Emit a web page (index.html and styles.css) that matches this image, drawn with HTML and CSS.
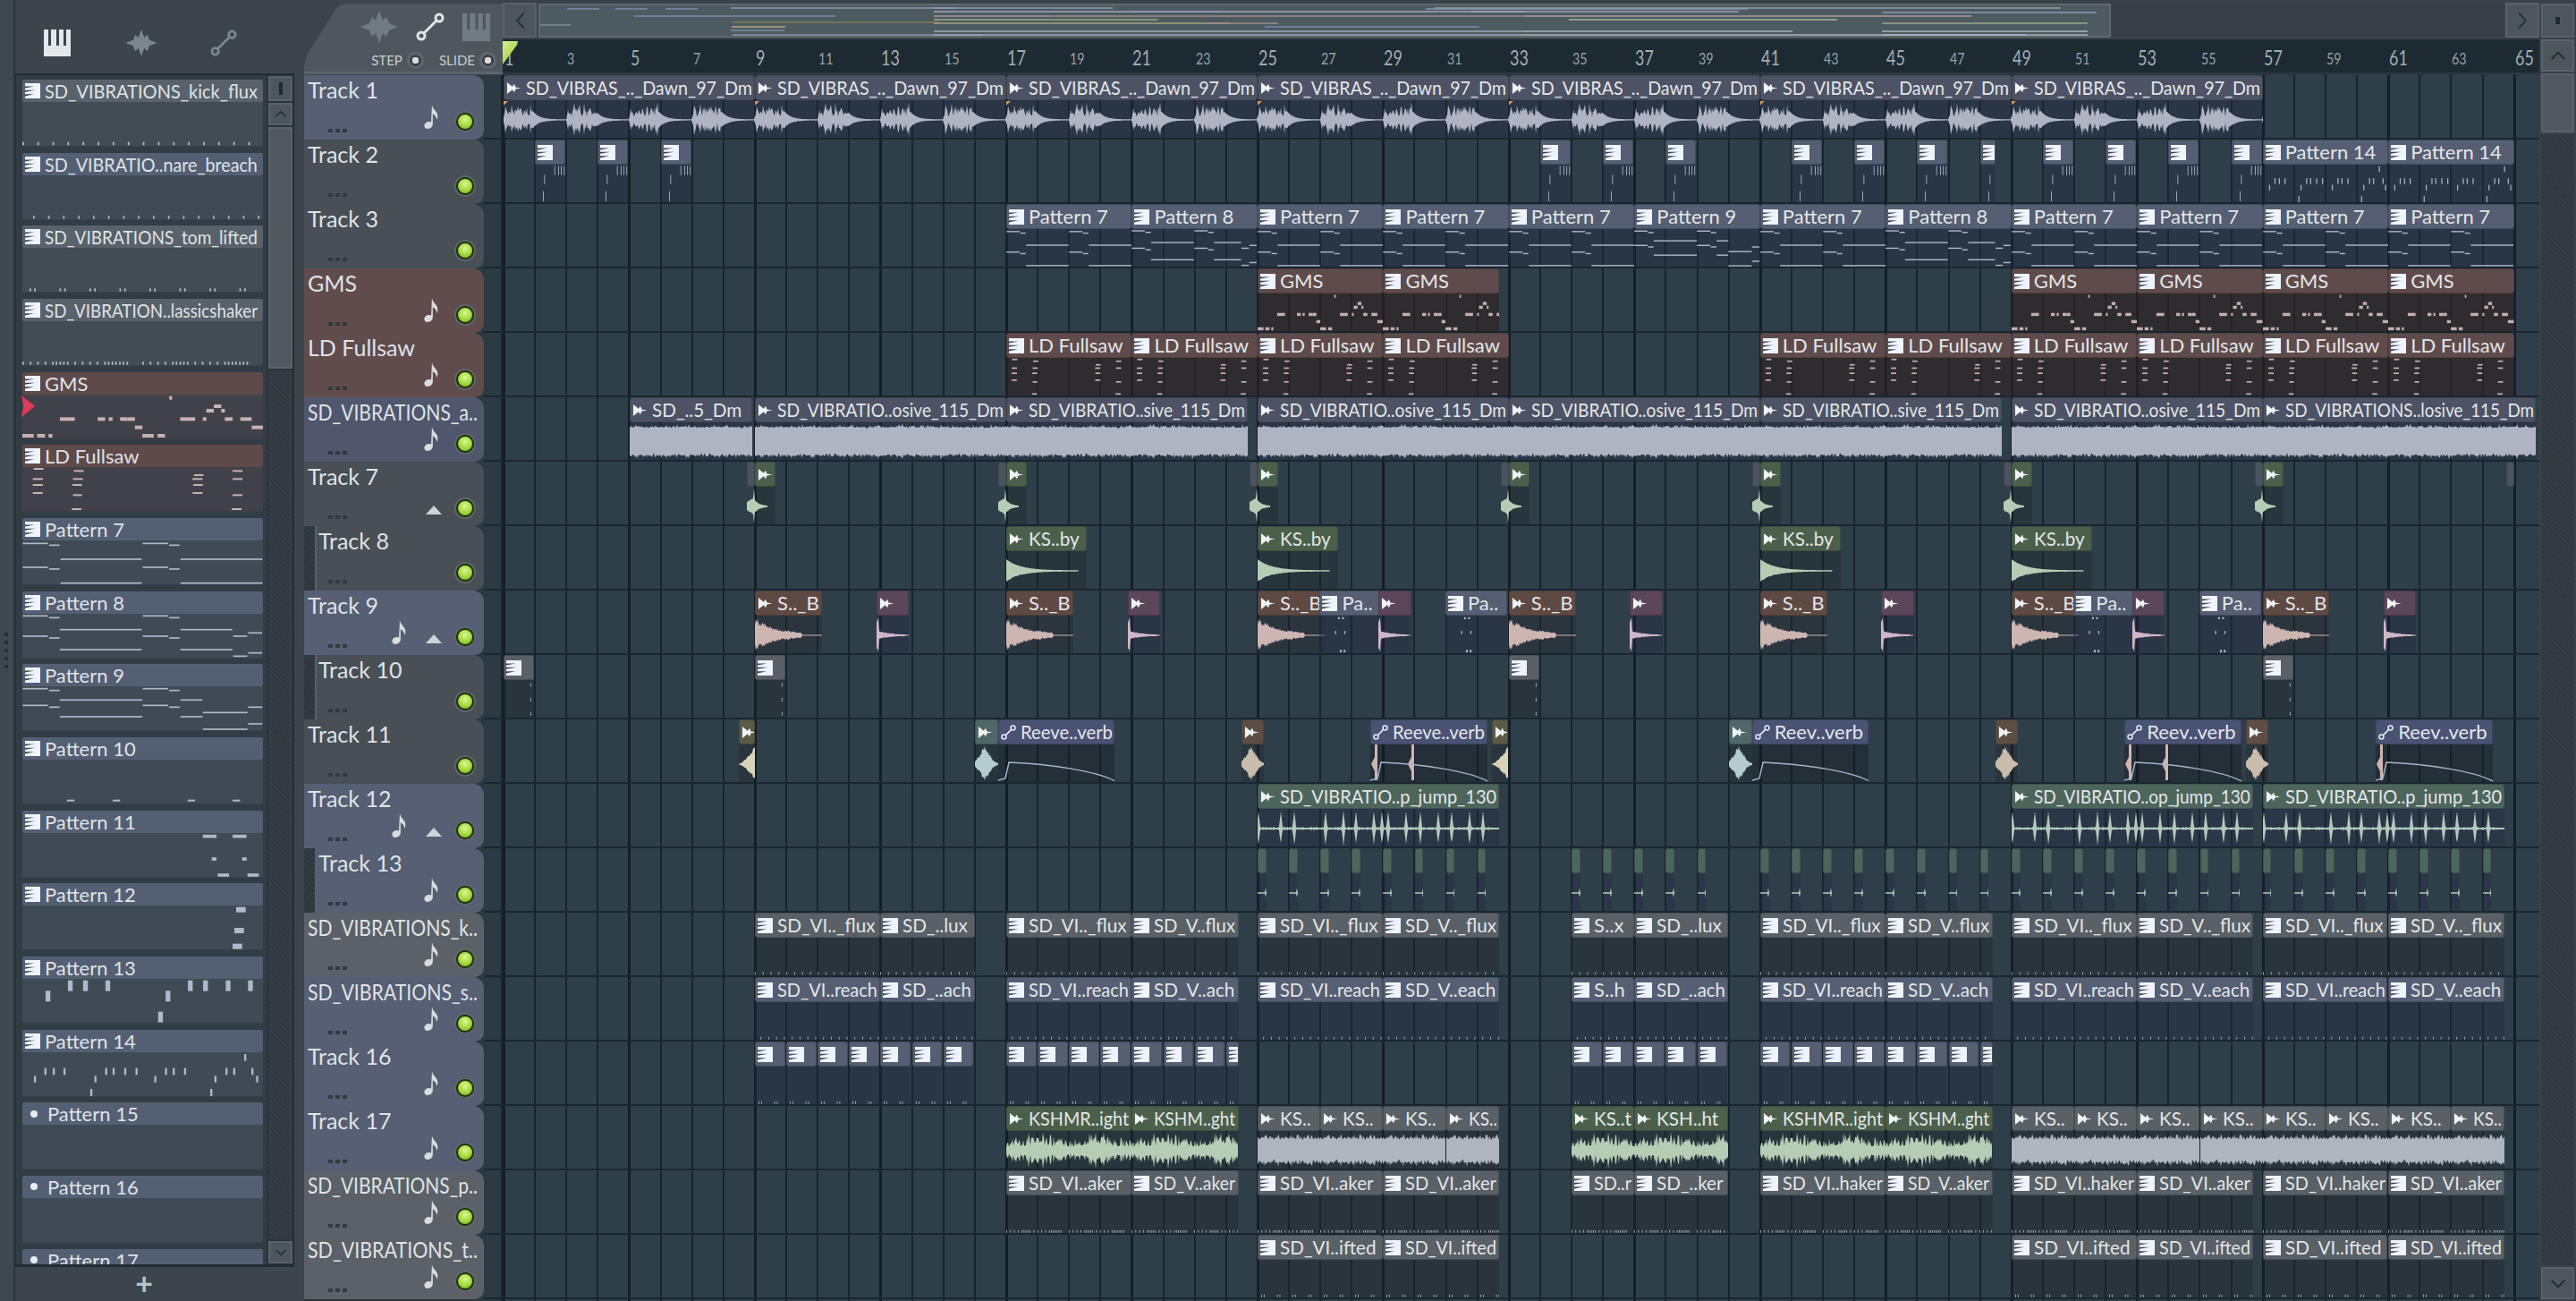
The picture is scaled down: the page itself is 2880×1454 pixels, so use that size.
FILE: index.html
```html
<!DOCTYPE html>
<html lang="en">
<head>
<meta charset="utf-8">
<title>Playlist</title>
<link rel="stylesheet" href="styles.css">
</head>
<body>
<svg class="defs" width="0" height="0" aria-hidden="true">
  <symbol id="i-pat" viewBox="0 0 17 17"><path fill="#eef3fc" d="M0 0h17v17H0z"/><path fill="#3c4453" d="M0 3.6h10.5L0 5.6zM0 7.8h11.5L0 9.8zM0 12.2h10L0 14.4z"/></symbol>
  <symbol id="i-aud" viewBox="0 0 18 18"><path fill="#eef3f4" d="M1 2l6.2 5.2L9.5 4l1.6 4 6.4 1-6.4 1-1.6 4-2.3-3.2L1 16z"/></symbol>
  <symbol id="i-auto" viewBox="0 0 22 22"><g fill="none" stroke="#e6eaf4" stroke-width="2"><circle cx="4.5" cy="17.5" r="3.2"/><circle cx="17.5" cy="4.5" r="3.2"/><path d="M7 15L15 7"/></g></symbol>
  <symbol id="i-note" viewBox="0 0 18 30"><path fill="#d8dcdc" d="M9.5 0c1 5 3.500 6 6 10 1.500 3 1.500 6 0 9-.3-3.500-2-6-5-7.500V24c0 3.500-3 6-6.500 6C1.500 30 0 28 0 26c0-3 3-5 6-5 1 0 2 .2 2.500.6z"/></symbol>
  <symbol id="i-piano" viewBox="0 0 30 30"><path fill="currentColor" d="M0 0h5v18h3V0h6v18h3V0h5v18h3V0h5v30H0z"/></symbol>
  <symbol id="i-wave" viewBox="0 0 42 36"><path fill="currentColor" d="M21 0l4 11 4-4 3 7 10 4-10 4-3 7-4-4-4 11-4-11-4 4-3-7-10-4 10-4 3-7 4 4z"/></symbol>
  <symbol id="i-curve" viewBox="0 0 32 32"><g fill="none" stroke="currentColor" stroke-width="3"><circle cx="6" cy="26" r="4"/><circle cx="26" cy="6" r="4"/><path d="M9 23L23 9"/></g></symbol>
</svg>

<div class="app">
  <div class="edge"><i></i><i></i><i></i><i></i><i></i></div>

  <aside class="picker">
    <div class="picker-tools">
      <svg class="tool tool-on"><use href="#i-piano"/></svg>
      <svg class="tool tool-wave"><use href="#i-wave"/></svg>
      <svg class="tool"><use href="#i-curve"/></svg>
    </div>
    <div class="picker-body">
      <div class="picker-list" id="picker"></div>
      <div class="picker-scroll">
        <div class="btn btn-mini"><b></b></div>
        <div class="btn btn-up"><svg viewBox="0 0 20 12"><path d="M2 10l8-8 8 8"/></svg></div>
        <div class="thumb thumb-p"></div>
        <div class="hatch"></div>
        <div class="btn btn-up"><svg viewBox="0 0 20 12"><path d="M2 2l8 8 8-8"/></svg></div>
      </div>
      <div class="marker"></div>
    </div>
    <div class="picker-add">+</div>
  </aside>

  <main class="playlist">
    <div class="pl-left">
      <div class="pl-top">
        <div class="corner">
          <div class="corner-icons">
            <svg class="ci ci-wave"><use href="#i-wave"/></svg>
            <svg class="ci ci-curve"><use href="#i-curve"/></svg>
            <svg class="ci ci-piano"><use href="#i-piano"/></svg>
          </div>
          <div class="corner-opts">
            <span>STEP</span><i class="radio"></i>
            <span>SLIDE</span><i class="radio"></i>
          </div>
        </div>
        <div class="pl-head">
          <div class="overview-row">
            <div class="btn btn-nav"><svg viewBox="0 0 14 24"><path d="M12 2L3 12l9 10"/></svg></div>
            <div class="overview" id="overview"></div>
            <div class="overview-rest"></div>
            <div class="btn btn-nav"><svg viewBox="0 0 14 24"><path d="M2 2l9 10-9 10"/></svg></div>
          </div>
          <div class="ruler" id="ruler"><div class="playhead"></div></div>
        </div>
      </div>
      <div class="pl-main">
        <div class="tracks" id="tracks"></div>
        <div class="gutter" id="gutter"></div>
        <div class="grid" id="grid"></div>
      </div>
    </div>
    <div class="vscroll">
      <div class="btn btn-big"><b></b></div>
      <div class="btn btn-bigup"><svg viewBox="0 0 20 12"><path d="M2 10l8-8 8 8"/></svg></div>
      <div class="thumb thumb-v"></div>
      <div class="hatch"></div>
      <div class="btn btn-bigup"><svg viewBox="0 0 20 12"><path d="M2 2l8 8 8-8"/></svg></div>
    </div>
  </main>
</div>
<script src="script.js"></script>
</body>
</html>
```
FILE: styles.css
```css
*{box-sizing:border-box}
html,body{margin:0;height:100%;overflow:hidden;background:#3b444a}
body{font-family:Lato,"Liberation Sans",sans-serif;color:#dfe3e6}
.defs{position:absolute}
.app{display:flex;width:2880px;height:1454px;overflow:hidden}
.fit{display:inline-block;flex:none;transform:scaleX(var(--sx,1));transform-origin:0 50%}

.edge{flex:0 0 17px;min-width:0;background:#3f484e;border-right:2px solid #2b353c;display:flex;flex-direction:column;align-items:center;justify-content:center;gap:5px;padding-right:2px}
.edge i{width:4px;height:4px;background:#283138}

.picker{flex:0 0 323px;min-width:0;display:flex;flex-direction:column;background:#3c454b;padding-right:11px}
.picker-tools{height:84px;flex:none;display:flex;align-items:flex-end;padding:0 0 19px 32px;gap:56px;border-bottom:2px solid #222c33}
.tool{width:30px;height:30px;color:#7c878c}
.tool-on{color:#e4e8ea}
.tool-wave{width:42px;margin-left:2px}
.picker-body{flex:1;display:flex;min-height:0;min-width:0;position:relative;border-bottom:3px solid #222c33;border-left:1px solid #222c33;border-right:2px solid #222c33}
.picker-list{flex:1;min-width:0;overflow:hidden;padding:5px 4px 0 7px;background:#323c44}
.picker-scroll{flex:0 0 29px;display:flex;flex-direction:column;gap:2px;background:#2a343b;padding:1px 0 1px 2px}
.picker-add{height:38px;flex:none;display:flex;align-items:center;justify-content:center;font-size:34px;font-weight:700;color:#b9c2c4;line-height:1;padding:0 24px 2px 0}
.marker{position:absolute;left:6px;top:358px;width:15px;height:24px;background:#e2395c;clip-path:polygon(0 0,100% 50%,0 100%,15% 50%);z-index:3}

.pitem{height:75px;margin-bottom:6.67px;display:flex;flex-direction:column}
.phead{height:25px;flex:none;display:flex;align-items:center;padding-left:3px;gap:5px;border-radius:2px;font-size:22px;white-space:nowrap;overflow:hidden;line-height:25px}
.phead .ic{width:17px;height:17px;flex:none}
.pdot{width:8px;height:8px;border-radius:50%;background:#e8ecf0;margin:0 6px 0 6px;flex:none}
.pbody{flex:1;overflow:hidden;background:#3f4a54;border-bottom:1px solid #36414a}
.pitem.red .pbody{background:#414149}
.pitem.grey .pbody{background:#414c54}
.pitem svg.notes{display:block;width:100%;height:100%}

.btn{background:#4e565d;box-shadow:inset 0 0 0 2px #5a6269;flex:none;display:flex;align-items:center;justify-content:center}
.btn svg{fill:none;stroke:#1f2a31;stroke-width:2}
.btn-mini{height:28px}
.btn-mini b{width:4px;height:14px;background:#1f2a31}
.btn-up{height:25px}
.btn-up svg{width:14px;height:9px}
.thumb{background:#50585f;box-shadow:inset 0 0 0 2px #5a6269;flex:none}
.thumb-p{height:270px}
.hatch{flex:1;background:repeating-linear-gradient(45deg,#30383e 0 2px,#363e44 2px 4px)}

.playlist{flex:1;display:flex;min-width:0}
.pl-left{flex:0 0 2499px;display:flex;flex-direction:column;min-width:0}
.pl-top{height:84px;flex:none;display:flex}
.corner{flex:0 0 222px;height:80px;margin-top:3px;background:#4f575d;clip-path:path('M0 80 V70 Q1 63 4 57 L33 11 Q38 1 48 1 H222 V80 Z');display:flex;flex-direction:column;align-items:flex-end;padding:9px 7px 0 0;border-bottom:3px solid #5d656b}
.corner-icons{display:flex;align-items:center;gap:20px;padding-right:7px;height:36px}
.ci{color:#717c81}
.ci-wave{width:42px;height:36px}
.ci-curve{width:32px;height:32px;color:#dfe4e6}
.ci-piano{width:31px;height:31px}
.corner-opts{display:flex;align-items:center;gap:5px;font-size:15px;color:#c6cccf;margin-top:8px;height:22px}
.corner-opts span{margin-left:12px}
.radio{width:19px;height:19px;border-radius:50%;background:radial-gradient(circle,#d8dcdc 0 3.5px,#3c444a 4px 6px,#5f686e 7px)}

.pl-head{flex:1;display:flex;flex-direction:column;min-width:0}
.overview-row{height:44px;flex:none;display:flex;gap:2px;padding-top:3px;background:#3a4248}
.btn-nav{width:38px;height:39px}
.btn-nav svg{width:13px;height:20px}
.overview{flex:0 0 1758px;height:38px;margin-top:1px;background:#4d5b60;border:2px solid #60696b;position:relative;overflow:hidden}
.ov{position:absolute;height:2px;opacity:.75}
.overview-rest{flex:1;background:#383f45;height:39px}
.ruler{flex:1;background:#1e2a32;position:relative;border-bottom:3px solid #2b373f;overflow:hidden}
.rnum{position:absolute;bottom:7px;line-height:1;color:#95a1a7;font-size:17px;transform:scaleX(.84);transform-origin:0 0}
.rnum.big{font-size:23px;color:#a2adb3;bottom:5px;transform:scaleX(.78)}
.playhead{position:absolute;left:0;top:2px;width:17px;height:26px;background:linear-gradient(135deg,#d9f08f,#95c52f);clip-path:polygon(0 0,100% 0,95% 15%,0 100%);z-index:2}

.pl-main{flex:1;display:flex;min-height:0;background:#2a3840}
.tracks{flex:0 0 201px;min-width:0;display:flex;flex-direction:column}
.gutter{flex:0 0 21px;background:#2b3a43;border-right:2px solid #18242c}
.grid{flex:1;min-width:0;background:repeating-linear-gradient(90deg,#131e26 0 3px,transparent 3px 140.48px),repeating-linear-gradient(90deg,#18242c 0 2px,#2f3f49 2px 35.12px);position:relative;overflow:hidden}
.gutrow{height:72px;border-bottom:2px solid #1a262e}

.track{height:72px;flex:none;position:relative;border-radius:0 12px 10px 0;background:var(--t);font-size:25px;line-height:1;padding:4px 0 0 4px;white-space:nowrap;overflow:hidden}
.track.indent{padding-left:16px}
.track.indent::before{content:"";position:absolute;left:0;top:0;bottom:0;width:12px;background:repeating-linear-gradient(45deg,#2c353b 0 2px,#343d43 2px 4px);border-right:2px solid #5a6268}
.track .dots{position:absolute;left:27px;bottom:8px;width:21px;height:4px;background:repeating-linear-gradient(90deg,#32393f 0 5px,transparent 5px 8px)}
.track .tnote{position:absolute;right:49px;top:33px;width:19px;height:27px}
.track.tri .tnote{right:85px}
.track .tri-up{position:absolute;right:47px;top:49px;width:18px;height:10px;background:#cfd4d6;clip-path:polygon(50% 0,100% 100%,0 100%)}
.track .led{position:absolute;right:11px;top:42px;width:20px;height:20px;border-radius:50%;border:2px solid #1d3005;box-shadow:0 0 0 2px #5d666b;background:radial-gradient(circle at 50% 35%,#dcf694 0,#a6dc44 50%,#6fa91f 100%)}
.t-blue{--t:#565f73}
.t-dark{--t:#484f55}
.t-red{--t:#604c4d}
.t-ind{--t:#50566c}
.t-light{--t:#5b6166}

.row{height:72px;border-bottom:2px solid #1a262e;position:relative}
.clip{position:absolute;top:0;height:70px;display:flex;flex-direction:column}
.clip-head{height:28px;flex:none;background:var(--h);border-radius:3px;border:1px solid rgba(20,26,30,.25);display:flex;align-items:center;font-size:22px;line-height:26px;color:#e2e6e8;padding-left:2px;gap:5px;white-space:nowrap;overflow:hidden;position:relative}
.clip-head .ic{width:17px;height:17px;flex:none}
.clip-body{flex:1;min-height:0;background:var(--b);color:var(--n);overflow:hidden;position:relative}
.clip-body svg{display:block;fill:currentColor}
.clip.bleed .clip-body{overflow:visible}
.clip.bleed .clip-body svg{overflow:visible}
.clip-body .mk{position:absolute;left:0;top:1px;width:5px;height:5px;background:#d89a58;clip-path:polygon(0 0,100% 0,0 100%)}
.curve{stroke:#a9b2cc;stroke-width:1.500;fill:none!important}

.slate{--h:#555e72;--b:rgba(36,40,66,.42);--n:#aeb5c9}
.dawn{--h:#4d5364;--b:rgba(36,40,66,.42);--n:#b0b4c2}
.grey{--h:#596066;--b:rgba(34,36,36,.36);--n:#aeb5bd}
.red{--h:#5f4b4b;--b:rgba(48,32,32,.62);--n:#c4aeb0}
.green{--h:#4b5f4b;--b:rgba(30,36,36,.34);--n:#b7ccb4}
.mint{--h:#4f6766;--b:rgba(26,32,38,.36);--n:#b4cbd0}
.teal{--h:#4e655c;--b:rgba(36,40,66,.38);--n:#b2c9bb}
.brown{--h:#5e4a43;--b:rgba(34,36,40,.34);--n:#cdb6b2}
.tan{--h:#5c4e44;--b:rgba(34,36,40,.34);--n:#c9bcab}
.purple{--h:#5c4659;--b:rgba(36,40,66,.44);--n:#cfb6c6}
.khaki{--h:#5a5a46;--b:rgba(34,36,40,.34);--n:#d6d3b8}
.auto{--h:#4a5274;--b:rgba(20,26,30,.4);--n:#a9b2cc}
.sliver{--h:#4b535f;--b:transparent;--n:transparent}

.vscroll{flex:1;display:flex;flex-direction:column;gap:2px;padding:4px 2px 2px 2px;background:#3a4248;min-width:0}
.btn-big{height:38px}
.btn-big b{width:5px;height:8px;background:#1f2a31}
.btn-bigup{height:36px}
.btn-bigup svg{width:20px;height:11px;stroke-width:2}
.thumb-v{height:66px}
```
FILE: script.js
```js
const BAR = 35.12, W4 = BAR * 4;

/* note data: [x, y, w, h] on an 808 x 147 canvas, i.e. one 4-bar pattern */
function lines(list, y0, h) { return list.map(n => [n[0] - 72, n[2] - y0 - h / 2, n[1] - n[0], h]); }
function p7base(y0, a) {
  return [[73,158,a],[162,197,a+6],[476,562,a],[565,600,a+6]];
}
const NOTES = {
  kick: Array.from({length:17}, (_, i) => [i * 50.6, 134, 5, 11]),
  snare: Array.from({length:16}, (_, i) => [36 + 50.35 * i, 136, 5, 10]),
  tom: Array.from({length:8}, (_, i) => [[24 + 100.7 * i, 136, 5, 10], [40 + 100.7 * i, 136, 5, 10]]).flat(),
  shaker: [0,25,50,75,100,112,125,137,150,175,200,225,250,275,287,300,312,325,337,350].flatMap(x => [[x, 136, 5, 10], [x + 403, 136, 5, 10]]),
  gms: lines([[565,575,326],[715,740,354],[690,715,369],[740,752,369],[198,248,397],[325,350,397],[362,375,397],[400,425,397],[425,450,397],[602,652,397],[678,690,397],[752,778,397],[804,842,397],[450,475,425],[842,880,425],[72,110,453],[122,148,453],[160,173,453],[475,513,453],[526,551,453]], 315, 12),
  ld: lines([[110,143,568],[245,278,575],[107,141,602],[242,275,602],[107,141,622],[240,272,622],[107,140,649],[242,272,656],[238,270,703],[648,680,589],[643,677,602],[646,678,622],[644,677,649],[778,811,575],[778,811,602],[778,811,656],[775,808,703]], 562, 6),
  p7: lines([...p7base(0,815),...p7base(0,895),[200,473,868],[200,473,948],[603,878,868],[603,878,948]], 805, 5),
  p8: lines([...p7base(0,1059),...p7base(0,1127),[198,473,1105],[198,473,1172],[603,777,1105],[603,777,1172],[780,827,1127],[830,877,1116],[780,827,1194],[830,877,1183]], 1052, 5),
  p9: lines([...p7base(0,105),...p7base(0,161),[198,475,143],[198,475,199],[603,677,143],[603,677,199],[678,828,185],[678,828,241],[830,878,167],[830,878,223]], 97, 5),
  p10: [[150,134,25,6],[303,134,25,6],[555,134,25,6],[706,134,25,6]],
  p11: lines([[678,724,601],[778,825,601],[708,724,677],[810,825,677],[728,766,731],[828,866,731]], 590, 11),
  p12: lines([[790,822,850],[784,816,920],[778,810,973]], 836, 18),
  p13: [[153,5,16,36],[204,5,16,36],[279,5,16,36],[556,5,16,36],[607,5,16,36],[683,5,16,36],[758,5,16,36],[78,40,16,36],[481,40,16,36],[456,110,16,36]],
  p14: [[745,6,7,23],...[74,102,138,278,303,342,380,479,505,543,682,708,769].map(x => [x,53,7,23]),...[39,242,443,645,785].map(x => [x,79,7,22]),[228,123,7,24],[631,123,7,24]],
  small: [[150,5,5,36],[168,5,5,36],[186,5,5,36],[125,5,5,36],[60,40,5,36],[52,104,5,40]],
  tail: [[172,12,5,14],[172,70,5,14],[172,125,5,14]],
  pa: [[120,6,12,8],[146,6,12,8],[100,60,8,12],[160,60,8,12],[132,134,12,10],[156,134,12,10]],
  none: []
};

function notesSvg(key, width, height) {
  const rects = NOTES[key].map(n => `<rect x="${n[0]}" y="${n[1]}" width="${n[2]}" height="${n[3]}"/>`).join('');
  return `<svg class="notes" width="${width}" height="${height}" viewBox="0 0 808 147" preserveAspectRatio="none">${rects}</svg>`;
}

/* waveforms: amplitude functions, drawn mirrored about the centre line */
function rng(seed) { return () => (seed = seed * 16807 % 2147483647) / 2147483647; }
const JUMP = [1,26,41,76,96,110,130,139,146,166,182,202,217,237,252];
const AMP = {
  dawn: (i, r) => { const t = i % (BAR * 2); return t < 33 ? (.34 + .66 * Math.pow(r(), 1.4)) * (.5 + .5 * Math.abs(Math.sin(t * .55))) * (t < 3 ? .9 : 1) : .45 * Math.exp(-(t - 33) / 7) + .03; },
  noise: (i, r) => .78 + .12 * r() + (r() > .93 ? .1 : 0),
  kick: (i, r) => i > 80 ? 0 : .03 + .62 * Math.exp(-i / 16),
  snare: (i, r) => i > 52 ? .03 : .03 + Math.exp(-i / 27) * (.55 + .45 * r()),
  tick: (i, r) => i > 32 ? .03 : .03 + (i < 3 ? 1 : .3 * Math.exp(-i / 12)) * (.7 + .3 * r()),
  diamond: (i, r) => i < 8 ? .25 + i * .03 : (i === 8 ? 1 : .03 + .4 * Math.exp(-(i - 8) / 5)),
  burst: (i, r) => { const d = (i - 11) / 8; return .03 + Math.exp(-d * d) * (.55 + .45 * r()); },
  rise: (i, r, w) => Math.max(.03, Math.pow(i / w, 1.3) * (.7 + .3 * r())),
  jump: (i, r) => { let a = .05; JUMP.forEach(x => { const d = (i - x) / 1.3; a = Math.max(a, .95 * Math.exp(-d * d)); }); return a + .08 * r() * (i % 3 === 0 ? 1 : 0); },
  tiny: (i) => i === 9 ? .28 : (i < 9 ? .04 : 0),
  green: (i, r) => Math.max(.12, (.3 + .85 * r() * Math.sqrt(r())) * (.55 + .45 * Math.abs(Math.sin(i * .045)))),
  dense: (i, r) => .62 + .38 * r() * r() + (i % 4 === 0 ? .2 * r() : 0)
};
const pathCache = {};
function wavePath(type, w, h) {
  const key = type + w;
  if (pathCache[key]) return pathCache[key];
  const r = rng(4711 + type.length * 31), mid = h / 2 + 1, span = h / 2 - 1;
  const n = Math.round(w), ups = [], dns = [];
  for (let i = 0; i <= n; i++) {
    const a = Math.min(1, AMP[type](i, r, n)) * span;
    ups.push(`${i} ${(mid - a).toFixed(1)}`);
    dns.unshift(`${i} ${(mid + a * (.8 + .2 * r())).toFixed(1)}`);
  }
  return pathCache[key] = `M${ups.join('L')}L${dns.join('L')}Z`;
}
function waveSvg(type, w, off) {
  const width = Math.round(w);
  return `<svg width="${width}" height="42"${off ? ` style="margin-left:${off}px"` : ''}><path d="${wavePath(type, width, 42)}"/></svg>`;
}

/* clip helpers */
const ICON = { p: 'i-pat', a: 'i-aud', c: 'i-auto' };
function clip(b, w, text, color, icon, body, extra) { return { b, w, text, color, icon, body, extra: extra || '' }; }
const pat = (b, w, text, color, key) => clip(b, w, text, color, 'p', { n: key });
const aud = (b, w, text, color, type, extra, off) => clip(b, w, text, color, 'a', { w: type, off }, extra);

const rows = Array.from({length: 19}, () => []);
const seq = (start, n, step) => Array.from({length: n}, (_, i) => start + i * step);

seq(1, 7, 8).forEach(b => rows[0].push(Object.assign(aud(b, 8, 'SD_VIBRAS_.._Dawn_97_Dm', 'dawn', 'dawn'), {mark: true})));

[2,4,6,34,36,38,42,44,46,50,52,54,56].forEach(b => rows[1].push(pat(b, .97, '', 'slate', 'small')));
rows[1].push(pat(48, .5, '', 'slate', 'small'));
rows[1].push(pat(57, 4, 'Pattern 14', 'slate', 'p14'), pat(61, 4, 'Pattern 14', 'slate', 'p14'));

[[17,7],[21,8],[25,7],[29,7],[33,7],[37,9],[41,7],[45,8],[49,7],[53,7],[57,7],[61,7]].forEach(([b, p]) => rows[2].push(pat(b, 4, 'Pattern ' + p, 'slate', 'p' + p)));

[[25,4],[29,3.7],[49,4],[53,4],[57,4],[61,4]].forEach(([b, w]) => rows[3].push(pat(b, w, 'GMS', 'red', 'gms')));
[17,21,25,29,41,45,49,53,57,61].forEach(b => rows[4].push(pat(b, 4, 'LD Fullsaw', 'red', 'ld')));

[[5,3.9,'SD_..5_Dm'],[9,8,'SD_VIBRATIO..osive_115_Dm'],[17,7.7,'SD_VIBRATIO..sive_115_Dm'],[25,8,'SD_VIBRATIO..osive_115_Dm'],[33,8,'SD_VIBRATIO..osive_115_Dm'],[41,7.7,'SD_VIBRATIO..sive_115_Dm'],[49,8,'SD_VIBRATIO..osive_115_Dm'],[57,8.7,'SD_VIBRATIONS..losive_115_Dm']].forEach(([b, w, t]) => rows[5].push(aud(b, w, t, 'dawn', 'noise')));

[9,17,25,33,41,49,57].forEach(b => {
  rows[6].push(clip(b - .25, .25, '', 'sliver', '', null));
  rows[6].push(aud(b, .66, '', 'green', 'diamond', 'bleed', -9));
});
rows[6].push(clip(64.75, .25, '', 'sliver', '', null));

[17,25,41,49].forEach(b => rows[7].push(aud(b, 2.57, 'KS..by', 'green', 'kick')));

[9,17,25,33,41,49,57].forEach(b => rows[8].push(aud(b, 2.13, 'S.._B', 'brown', 'snare')));
[27,31,51,55].forEach(b => rows[8].push(pat(b - .02, 1.96, 'Pa..', 'slate', 'pa')));
[9,17,25,33,41,49,57].forEach(b => rows[8].push(aud(b + 3.86, 1.03, '', 'purple', 'tick')));

[1,9,33,57].forEach(b => rows[9].push(pat(b, .97, '', 'grey', 'tail')));

rows[10].push(
  aud(8.5, .5, '', 'khaki', 'rise'),
  aud(16, .74, '', 'mint', 'burst'),
  clip(16.74, 3.72, 'Reeve..verb', 'auto', 'c', {c: 1}),
  aud(24.5, .7, '', 'tan', 'burst'),
  clip(28.6, 3.72, 'Reeve..verb', 'auto', 'c', {c: 1, spikes: [5, 46]}),
  aud(32.47, .5, '', 'khaki', 'rise'),
  aud(40, .74, '', 'mint', 'burst'),
  clip(40.74, 3.72, 'Reev..verb', 'auto', 'c', {c: 1}),
  aud(48.5, .7, '', 'tan', 'burst'),
  clip(52.6, 3.72, 'Reev..verb', 'auto', 'c', {c: 1, spikes: [5, 46]}),
  aud(56.47, .7, '', 'tan', 'burst'),
  clip(60.6, 3.72, 'Reev..verb', 'auto', 'c', {c: 1, spikes: [5]})
);

rows[11].push(aud(25, 7.7, 'SD_VIBRATIO..p_jump_130', 'teal', 'jump'), aud(49, 7.7, 'SD_VIBRATIO..op_jump_130', 'teal', 'jump'), aud(57, 7.7, 'SD_VIBRATIO..p_jump_130', 'teal', 'jump'));

[...seq(25, 8, 1), ...seq(35, 5, 1), ...seq(41, 24, 1)].forEach(b => rows[12].push(aud(b, .28, '', 'teal', 'tiny', 'nano')));

function section(row, names, key, color, kind) {
  names.forEach(([b, w, t]) => rows[row].push(kind === 'a' ? aud(b, w, t, color, key) : pat(b, w, t, color, key)));
}
section(13, [[9,3.98,'SD_VI.._flux'],[13,3,'SD_..lux'],[17,3.98,'SD_VI.._flux'],[21,3.4,'SD_V..flux'],[25,3.98,'SD_VI.._flux'],[29,3.7,'SD_V.._flux'],[35,1.98,'S..x'],[37,2.98,'SD_..lux'],[41,3.98,'SD_VI.._flux'],[45,3.4,'SD_V..flux'],[49,3.98,'SD_VI.._flux'],[53,3.7,'SD_V.._flux'],[57,3.98,'SD_VI.._flux'],[61,3.7,'SD_V.._flux']], 'kick', 'grey');
section(14, [[9,3.98,'SD_VI..reach'],[13,3,'SD_..ach'],[17,3.98,'SD_VI..reach'],[21,3.4,'SD_V..ach'],[25,3.98,'SD_VI..reach'],[29,3.7,'SD_V..each'],[35,1.98,'S..h'],[37,2.98,'SD_..ach'],[41,3.98,'SD_VI..reach'],[45,3.4,'SD_V..ach'],[49,3.98,'SD_VI..reach'],[53,3.7,'SD_V..each'],[57,3.98,'SD_VI..reach'],[61,3.7,'SD_V..each']], 'snare', 'slate');
[...seq(9, 7, 1), ...seq(17, 7, 1), ...seq(35, 5, 1), ...seq(41, 7, 1)].forEach(b => rows[15].push(pat(b, .96, '', 'slate', 'tom')));
rows[15].push(pat(24, .4, '', 'slate', 'tom'), pat(48, .4, '', 'slate', 'tom'));
section(16, [[17,3.98,'KSHMR..ight'],[21,3.4,'KSHM..ght'],[35,1.98,'KS..t'],[37,2.98,'KSH..ht'],[41,3.98,'KSHMR..ight'],[45,3.4,'KSHM..ght']], 'green', 'green', 'a');
[...seq(25, 4, 2).map(b => [b, b === 31 ? 1.7 : 2]), ...seq(49, 8, 2).map(b => [b, b === 63 ? 1.7 : 2])].forEach(([b, w]) => rows[16].push(aud(b, w, 'KS..', 'grey', 'dense')));
section(17, [[17,3.98,'SD_VI..aker'],[21,3.4,'SD_V..aker'],[25,3.98,'SD_VI..aker'],[29,3.7,'SD_VI..aker'],[35,1.98,'SD..r'],[37,2.98,'SD_..ker'],[41,3.98,'SD_VI..haker'],[45,3.4,'SD_V..aker'],[49,3.98,'SD_VI..haker'],[53,3.7,'SD_VI..aker'],[57,3.98,'SD_VI..haker'],[61,3.7,'SD_VI..aker']], 'shaker', 'grey');
section(18, [[25,3.98,'SD_VI..ifted'],[29,3.7,'SD_VI..ifted'],[49,3.98,'SD_VI..ifted'],[53,3.7,'SD_VI..ifted'],[57,3.98,'SD_VI..ifted'],[61,3.7,'SD_VI..ifted']], 'tom', 'grey');

/* playlist grid */
function clipHtml(c) {
  const px = c.w * BAR;
  let body = '';
  if (c.body && c.body.n) body = notesSvg(c.body.n, W4, 42);
  else if (c.body && c.body.w) body = waveSvg(c.body.w, px, c.body.off);
  else if (c.body && c.body.c) {
    const spikes = (c.body.spikes || []).map(s => `<path d="M${s} 40V0h3v40zM${s - 4} 22l4-8v16z" fill="#cdb6b2"/>`).join('');
    body = `<svg width="${Math.round(px)}" height="42">${spikes}<path class="curve" d="M0 40L8 38L12 20C60 22 110 30 ${Math.round(px)} 41"/></svg>`;
  }
  const icon = c.extra === 'nano' || !c.icon ? '' : `<svg class="ic"><use href="#${ICON[c.icon]}"/></svg>`;
  const mark = c.mark ? '<i class="mk"></i>' : '';
  const head = `<div class="clip-head">${icon}${c.text ? `<span class="fit">${c.text}</span>` : ''}</div>`;
  return `<div class="clip ${c.color} ${c.extra}" data-w="${px.toFixed(0)}" style="left:${((c.b - 1) * BAR + 1).toFixed(1)}px;width:${px.toFixed(1)}px">${head}<div class="clip-body">${mark}${body}</div></div>`;
}
document.getElementById('grid').innerHTML = rows.map(r => `<div class="row">${r.map(clipHtml).join('')}</div>`).join('');
document.getElementById('gutter').innerHTML = rows.map(() => '<div class="gutrow"></div>').join('');

/* track headers */
const TRACKS = [
  ['Track 1','t-blue',1],['Track 2','t-dark'],['Track 3','t-dark'],['GMS','t-red',1],['LD Fullsaw','t-red',1],
  ['SD_VIBRATIONS_a..','t-ind',1],['Track 7','t-dark',0,1],['Track 8','t-dark',0,0,1],['Track 9','t-blue',1,1],
  ['Track 10','t-dark',0,0,1],['Track 11','t-dark'],['Track 12','t-blue',1,1],['Track 13','t-blue',1,0,1],
  ['SD_VIBRATIONS_k..','t-light',1],['SD_VIBRATIONS_s..','t-blue',1],['Track 16','t-blue',1],['Track 17','t-blue',1],
  ['SD_VIBRATIONS_p..','t-light',1],['SD_VIBRATIONS_t..','t-light',1]
];
document.getElementById('tracks').innerHTML = TRACKS.map(([name, col, note, tri, ind]) =>
  `<div class="track ${col}${tri ? ' tri' : ''}${ind ? ' indent' : ''}"><span class="fit">${name}</span><i class="dots"></i>` +
  (note ? '<svg class="tnote"><use href="#i-note"/></svg>' : '') +
  (tri ? '<i class="tri-up"></i>' : '') + '<i class="led"></i></div>').join('');

/* clip picker */
const PICKS = [
  ['SD_VIBRATIONS_kick_flux','grey','kick'],['SD_VIBRATIO..nare_breach','slate','snare'],
  ['SD_VIBRATIONS_tom_lifted','grey','tom'],['SD_VIBRATION..lassicshaker','grey','shaker'],
  ['GMS','red','gms'],['LD Fullsaw','red','ld'],['Pattern 7','slate','p7'],['Pattern 8','slate','p8'],
  ['Pattern 9','slate','p9'],['Pattern 10','slate','p10'],['Pattern 11','slate','p11'],['Pattern 12','slate','p12'],
  ['Pattern 13','slate','p13'],['Pattern 14','slate','p14'],['Pattern 15','slate','none',1],['Pattern 16','slate','none',1],['Pattern 17','slate','none',1]
];
const PCOL = { grey: '#59626a', slate: '#555f74', red: '#5f4a4a' };
const PNOTE = { grey: '#b9c2c6', slate: '#b1b8cb', red: '#c8b2b4' };
document.getElementById('picker').innerHTML = PICKS.map(([name, col, key, empty]) =>
  `<div class="pitem ${col}"><div class="phead" style="background:${PCOL[col]}">` +
  (empty ? '<i class="pdot"></i>' : '<svg class="ic"><use href="#i-pat"/></svg>') +
  `<span class="fit">${name}</span></div><div class="pbody" style="fill:${PNOTE[col]}">${notesSvg(key, 268, 50)}</div></div>`).join('');

/* squeeze long names into the room their box has */
function fit(span, room, base) {
  const w = span.getBoundingClientRect().width;
  span.style.setProperty('--sx', Math.min(base, room / w).toFixed(3));
}
document.querySelectorAll('.clip').forEach(c => {
  const s = c.querySelector('.fit');
  if (s) fit(s, +c.dataset.w - 28, /^(SD|KS)/.test(s.textContent) ? .94 : 1);
});
document.querySelectorAll('.phead .fit').forEach(s => fit(s, 238, 1));
document.querySelectorAll('.track .fit').forEach(s => fit(s, 190, 1));

/* timeline numbers */
const ruler = document.getElementById('ruler');
for (let n = 1; n <= 65; n += 2) {
  const s = document.createElement('span');
  s.className = 'rnum' + ((n - 1) % 4 === 0 ? ' big' : '');
  s.textContent = n;
  s.style.left = ((n - 1) * BAR + 2).toFixed(1) + 'px';
  ruler.appendChild(s);
}

/* overview strip: thin marks for each section of the song */
const OV = [
  [0,34,21,'#7f8a9a'],[30,36,3,'#7c88b0'],[84,36,3,'#7c88b0'],[140,36,3,'#7c88b0'],[105,225,11,'#7f89a8'],[213,250,2,'#8b95b0'],
  [215,230,18,'#85785a'],[214,60,23,'#b8a38a'],[213,60,27,'#7f8aa8'],
  [215,280,35,'#8a93b0'],[215,280,38,'#8a93b0'],[215,280,32,'#8a93b0'],[440,200,2,'#8b95b0'],[440,130,11,'#7f89a8'],
  [440,660,6,'#9ca5b8'],[440,660,11,'#a08a8a'],[440,250,15,'#94a888'],[440,330,19,'#a6a078'],[440,660,28,'#9ca5b8'],[440,660,32,'#9ca5b8'],[440,660,36,'#9ca5b8'],
  [660,100,6,'#8f98b2'],[745,80,19,'#a08a8a'],[810,240,23,'#7884ae'],
  [990,360,3,'#8a93b0'],[1040,300,6,'#9ca5b8'],[1000,700,2,'#8f98b2'],[1100,500,11,'#b29a9a'],[1150,300,15,'#a6b498'],[1100,300,28,'#a8b0c0'],[1100,560,32,'#a8b0c0'],
  [1500,240,7,'#8f98b2'],[1500,230,19,'#9ca888'],[1500,230,28,'#a8b0c0'],[1500,230,32,'#a8b0c0']
];
document.getElementById('overview').innerHTML = OV.map(o => `<i class="ov" style="left:${o[0]}px;width:${o[1]}px;top:${o[2]}px;background:${o[3]}"></i>`).join('');
```
